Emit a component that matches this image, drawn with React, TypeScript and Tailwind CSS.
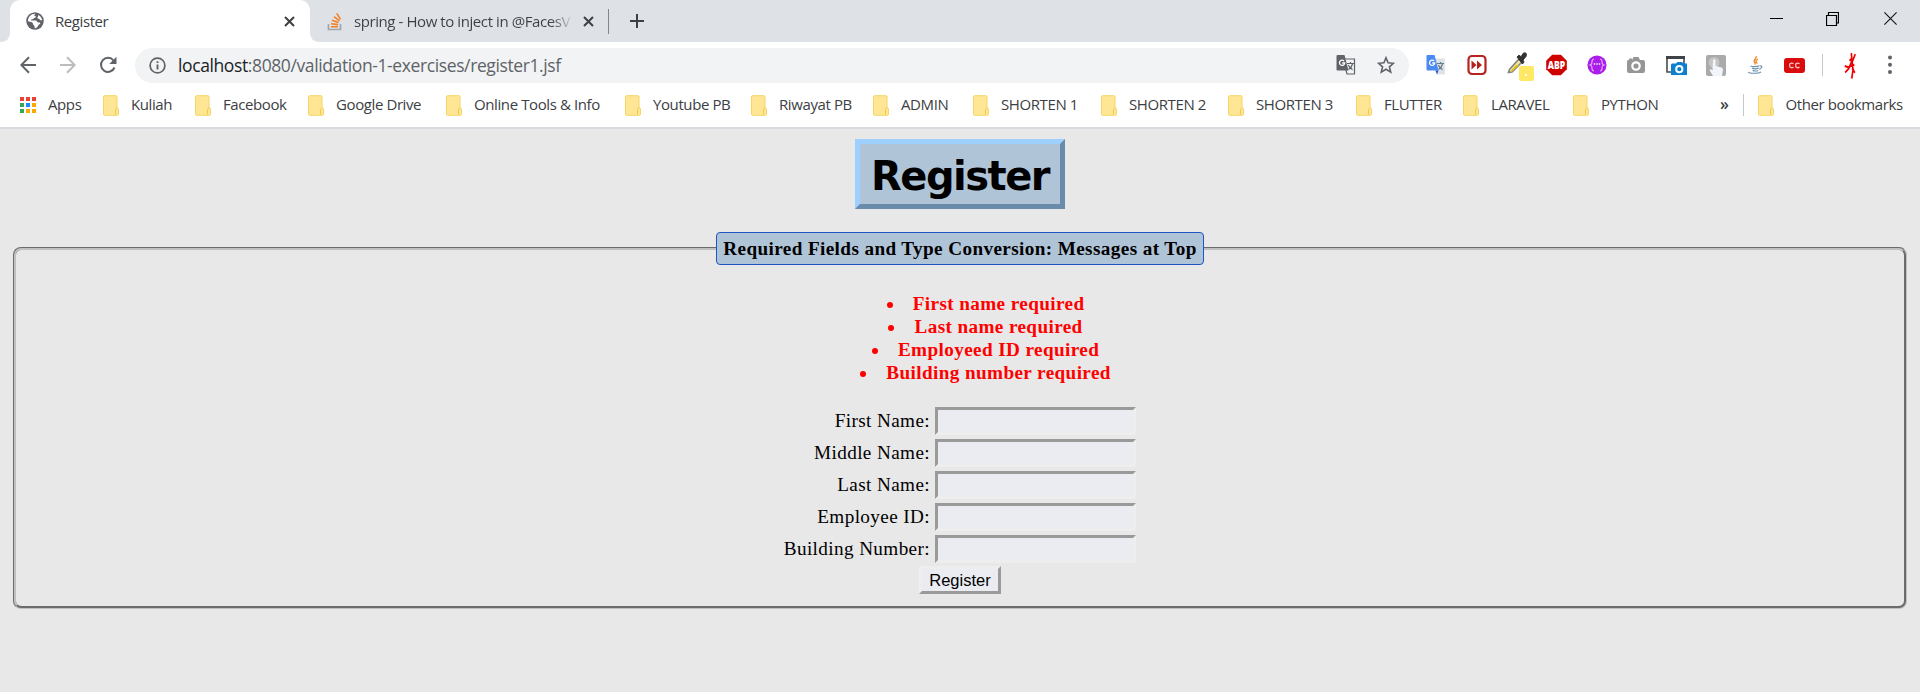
import React from "react";

const bookmarks = [
  { label: "Kuliah", w: "w-[92px]" },
  { label: "Facebook", w: "w-[113px]" },
  { label: "Google Drive", w: "w-[138px]" },
  { label: "Online Tools & Info", w: "w-[179px]" },
  { label: "Youtube PB", w: "w-[126px]" },
  { label: "Riwayat PB", w: "w-[122px]" },
  { label: "ADMIN", w: "w-[100px]" },
  { label: "SHORTEN 1", w: "w-[128px]" },
  { label: "SHORTEN 2", w: "w-[127px]" },
  { label: "SHORTEN 3", w: "w-[128px]" },
  { label: "FLUTTER", w: "w-[107px]" },
  { label: "LARAVEL", w: "w-[110px]" },
  { label: "PYTHON", w: "w-[110px]" },
];

const messages = [
  "First name required",
  "Last name required",
  "Employeed ID required",
  "Building number required",
];

const fields = ["First Name:", "Middle Name:", "Last Name:", "Employee ID:", "Building Number:"];

function Folder() {
  return (
    <svg width="17" height="21" viewBox="0 0 17 21" className="shrink-0">
      <path d="M1.500.7h11.500a1 1 0 0 1 1 1V13l1.500.7v5.600a1 1 0 0 1-1 1h-13a1 1 0 0 1-1-1v-17.600a1 1 0 0 1 1-1z" fill="#ffe694" stroke="#f5d567" />
      <path d="M12.500 19.500v-5q.5-1.500 1.800-1.500" fill="none" stroke="#efc94c" />
    </svg>
  );
}

function TabClose() {
  return (
    <svg width="11" height="11" viewBox="0 0 11 11" className="shrink-0">
      <path d="M1 1l9 9M10 1L1 10" stroke="#3c4043" strokeWidth="2" />
    </svg>
  );
}

function Tabs() {
  return (
    <div className="flex h-[42px] bg-[#dee1e6]">
      <svg width="10" height="42" className="shrink-0">
        <path d="M10 0V32Q10 42 0 42H10z" fill="#fff" />
      </svg>
      <div className="flex h-[42px] w-[300px] items-center rounded-t-[10px] bg-white pl-4">
        <svg width="18" height="18" viewBox="0 0 24 24" className="shrink-0">
          <circle cx="12" cy="12" r="11.700" fill="#5f6368" />
          <path
            d="M12.500 2.500c-2 1-1.500 2.200-.3 2.700 1.800.6 1.200 2.300-.5 2.500-1.700.1-1.200 1.700-2.700 2-1.400.2-2.600.4-2.300 1.600H13c1.600.2 1.600 2.400 3.200 2.600h2.300c.8.200.7 1.200.2 1.700-1 1-1.700.8-2.200 2-.6 1.400-1.900 3.700-4 4-1 0-1-1.400-1.100-2.400-.1-1.600-1.800-1.500-2-3.300-.2-1.600-1.200-2.200-2.700-2.600L2.600 12.200C2.500 6.800 6.800 2.300 12.500 2.500zM16 3.600c3 1.400 5.100 4.200 5.500 7.500l-2-.1c-1.300-.3-1.200-1.800-2.600-2.100-1.700-.3-2.200-1.600-1.200-2.700.7-.8 1-1.500.3-2.600z"
            fill="#fff"
          />
        </svg>
        <span className="ml-[11px] w-[229px] text-[15px] tracking-[-0.42px] text-[#3c4043]">Register</span>
        <TabClose />
      </div>
      <svg width="10" height="42" className="shrink-0">
        <path d="M0 0V32Q0 42 10 42H0z" fill="#fff" />
      </svg>
      <div className="flex items-center pl-[7px]">
        <svg width="15" height="20" viewBox="0 0 15 20" className="shrink-0">
          <path d="M1.500 13v5.500h12V13" fill="none" stroke="#a3a8ad" strokeWidth="1.700" />
          <path d="M4 15.800h7M4.100 12.800l7 .8M5 9.300l6.500 2.200M7 5.600l5.500 4.300M9.800 2.300l3.700 6" stroke="#f48024" strokeWidth="1.600" />
        </svg>
        <span className="ml-[12px] block w-[219px] overflow-hidden bg-linear-to-r from-[#3c4043] from-90% to-[#dee1e6] bg-clip-text text-[15px] tracking-[-0.42px] whitespace-nowrap text-transparent">
          spring - How to inject in @FacesV
        </span>
        <span className="ml-[10px] flex"><TabClose /></span>
        <div className="ml-[14px] h-[25px] w-px bg-[#80868b]" />
        <svg width="16" height="16" viewBox="0 0 16 16" className="ml-5">
          <path d="M8 1v14M1 8h14" stroke="#3c4043" strokeWidth="2" />
        </svg>
      </div>
      <div className="mr-[23px] ml-auto flex items-center pb-[5px]">
        <svg width="13" height="13" viewBox="0 0 13 13"><path d="M0 6.500h13" stroke="#000" /></svg>
        <svg width="13" height="14" viewBox="0 0 13 14" className="ml-[43px]">
          <path d="M.5 3.500h10v10H.5zM2.500 3V.5h10v10.500h-2" fill="none" stroke="#000" strokeWidth="1.200" />
        </svg>
        <svg width="13" height="13" viewBox="0 0 13 13" className="ml-[45px]">
          <path d="M.4.400l12.200 12.200M12.600.400L.4 12.600" stroke="#111" strokeWidth="1.100" />
        </svg>
      </div>
    </div>
  );
}

function TranslateIcon({ gray }: { gray?: boolean }) {
  return (
    <svg width="20" height="22" viewBox="0 0 20 22">
      <path d="M7 5h11.500v15H11z" fill={gray ? "#f1f3f4" : "#dfe1e5"} stroke={gray ? "#5f6368" : "#e4e6ea"} strokeWidth="1.200" />
      <path d="M11 9.500h7M14.500 8v1.500M16.500 10c-.6 2.500-2 4.200-4 5.500M12.300 11c1 2 2.500 3.500 4.200 4.800" stroke={gray ? "#5f6368" : "#607d8b"} strokeWidth="1.200" fill="none" />
      <path d="M1.500 1h7l4 15.500h-11a1 1 0 0 1-1-1V2a1 1 0 0 1 1-1z" fill={gray ? "#5f6368" : "#4a8af4"} />
      {!gray && <path d="M9.500 16.500h3l-1.500 4z" fill="#2456c5" />}
      <path d="M8 7a2.600 2.600 0 1 0 .7 2H6.300" stroke="#fff" strokeWidth="1.300" fill="none" />
    </svg>
  );
}

function Toolbar() {
  return (
    <div className="flex h-[46px] items-center bg-white pl-5">
      <svg width="16" height="18" viewBox="0 0 16 18">
        <path d="M16 9H1.500M9 1.200L1.300 9 9 16.800" fill="none" stroke="#5f6368" strokeWidth="2" />
      </svg>
      <svg width="16" height="18" viewBox="0 0 16 18" className="ml-6">
        <path d="M0 9h14.500M7 1.200L14.700 9 7 16.800" fill="none" stroke="#babcbe" strokeWidth="2" />
      </svg>
      <svg width="18" height="18" viewBox="0 0 18 18" className="ml-[23px]">
        <path d="M15.500 11.500A7 7 0 1 1 14.500 4.500" fill="none" stroke="#5f6368" strokeWidth="2" />
        <path d="M17.500.8V8h-7.200z" fill="#5f6368" />
      </svg>
      <div className="ml-[18px] flex h-[35px] w-[1274px] items-center rounded-full bg-[#f1f3f4] pl-[14px]">
        <svg width="17" height="17" viewBox="0 0 17 17">
          <circle cx="8.500" cy="8.500" r="7.400" fill="none" stroke="#5f6368" strokeWidth="1.700" />
          <path d="M8.500 7.500v5M8.500 4.200V6" stroke="#5f6368" strokeWidth="1.900" />
        </svg>
        <span className="ml-[12px] text-[17.500px] tracking-[-0.39px] whitespace-nowrap text-[#5f6368]">
          <span className="text-[#202124]">localhost</span>:8080/validation-1-exercises/register1.jsf
        </span>
        <div className="mr-[14px] ml-auto flex items-center gap-[21px]">
          <TranslateIcon gray />
          <svg width="18" height="18" viewBox="0 0 18 18">
            <path d="M9 1.800l2.100 5 5.400.5-4.100 3.500 1.300 5.300L9 13.200l-4.700 2.900 1.300-5.300-4.100-3.500 5.400-.5z" fill="none" stroke="#5f6368" strokeWidth="1.600" />
          </svg>
        </div>
      </div>
      <div className="ml-[17px] flex items-center">
        <div className="w-[41px]"><TranslateIcon /></div>
        <svg width="20" height="22" viewBox="0 0 20 21" className="mr-5">
          <rect x="1.500" y="1.500" width="17" height="18" rx="3.500" fill="#fff" stroke="#b72420" strokeWidth="2.200" />
          <path d="M4.500 6l5 4.500-5 4.500zM10 6l5 4.500-5 4.500z" fill="#b5221c" />
        </svg>
        <svg width="28" height="34" viewBox="0 0 28 34" className="mr-[11px]">
          <path d="M1.500 24.500l1-3L12 11l3 3-10 10z" fill="#f2e89a" stroke="#858585" strokeWidth="1.600" />
          <path d="M3.500 23L9 17h3l-7.500 7z" fill="#e5c318" />
          <path d="M10 9l2-1.800 2 1.500L16.500 5q4-1 2.500 3.500l-3 3.500 1 2-1.500 2z" fill="#333" stroke="#333" />
          <rect x="12" y="18" width="15" height="15" rx="2" fill="#ffe863" />
          <path d="M18 27h2" stroke="#fff" strokeWidth="2" />
        </svg>
        <svg width="21" height="22" viewBox="0 0 21 22" className="mr-5">
          <path d="M6.200.8h8.600l6 6v8.400l-6 6H6.200l-6-6V6.800z" fill="#cf0000" />
          <text x="10.500" y="14.600" textAnchor="middle" fontFamily="Open Sans, sans-serif" fontWeight="800" fontSize="10" textLength="17.500" lengthAdjust="spacingAndGlyphs" fill="#fff">ABP</text>
        </svg>
        <svg width="20" height="20" viewBox="0 0 20 20" className="mr-[19px]">
          <circle cx="10" cy="10" r="9.600" fill="#aa1dea" />
          <path d="M7 4C4.700 4.300 4.800 6 4.900 8c0 1-.7 1.600-1.900 2 1.200.4 1.900 1 1.900 2-.1 2-.2 3.700 2.100 4M13 4c2.300.3 2.200 2 2.100 4 0 1 .7 1.600 1.900 2-1.200.4-1.900 1-1.900 2 .1 2 .2 3.700-2.100 4" fill="none" stroke="#e0aef5" strokeWidth="1.200" />
          <path d="M6.800 9h1.400M9.300 9h1.400M11.800 9h1.400" stroke="#fff" strokeWidth="1.500" />
        </svg>
        <svg width="20" height="18" viewBox="0 0 20 18" className="mr-5">
          <path d="M2 4h1V2.500h3V4l1.500-3h5L14 4h3q2 0 2 2v9q0 2-2 2H3q-2 0-2-2V6q0-2 1-2z" fill="#969696" />
          <circle cx="10" cy="10" r="3.700" fill="#969696" stroke="#fff" strokeWidth="2.200" />
        </svg>
        <svg width="21" height="21" viewBox="0 0 21 21" className="mr-[19px]">
          <path d="M1 2h17v15H1z" fill="#fff" stroke="#4b4b4b" strokeWidth="1.600" />
          <path d="M0 1h19v3H0z" fill="#3e4347" />
          <path d="M6 8.500h4L11.500 7H16l1.500 1.500H21V20H5V9.500z" fill="#0c7fd1" />
          <circle cx="13.300" cy="14.200" r="3.100" fill="#0c7fd1" stroke="#fff" strokeWidth="2" />
        </svg>
        <svg width="20" height="21" viewBox="0 0 20 21" className="mr-[21px]">
          <rect width="20" height="21" rx="2" fill="#aaa" />
          <circle cx="8" cy="7.500" r="5.500" fill="#c5c5c5" />
          <path d="M7 5q1.500-1.500 2.500 0v6l6 1.500q1.500.5 1.500 2.500l-1 6H7l-3.500-6q1-1.500 3 .5z" fill="#f2f6fb" />
        </svg>
        <svg width="18" height="22" viewBox="0 0 20 22" className="mr-[19px]">
          <path d="M10 1c2 3-4 4-1.500 7 .8 1 .8 2 0 2.500M12 4.500c-4 2.500-1 3-1 5" fill="none" stroke="#ed8b27" strokeWidth="1.500" />
          <path d="M4 12c2 1 7 1 10-.2M5.500 14.500c2 .8 5.500.8 7.500 0M6.300 17c2 .8 4.500.8 6 0M1.500 18.700c1 2 12 2 14 0M14.500 12c3.500-.5 2 3-1 3.700" fill="none" stroke="#6991af" strokeWidth="1.300" />
        </svg>
        <svg width="21" height="17" viewBox="0 0 21 17">
          <rect y="1" width="21" height="15" rx="3" fill="#d90d0d" />
          <path d="M9.500 6.700q-2-1.300-3.500 0-1 1.700 0 3.400 1.500 1.300 3.500 0M15.500 6.700q-2-1.300-3.500 0-1 1.700 0 3.400 1.500 1.300 3.500 0" fill="none" stroke="#ffc5c5" strokeWidth="1.300" />
        </svg>
        <div className="ml-[17px] h-[22px] w-px bg-[#c4c7cb]" />
        <svg width="14" height="27" viewBox="0 0 16 26" preserveAspectRatio="none" className="ml-[20px]">
          <path d="M9.500 1L10 6.200 7.500 8.500M14 2l-3.500 7.500 1 7.500-1.500 8.500M11 7L6.500 16l-4 3.800M2 13.500l4 1.200 7-2.500M10.500 15.500l3 4.500" fill="none" stroke="#ed0000" strokeWidth="1.900" strokeLinejoin="round" />
        </svg>
        <svg width="4" height="20" viewBox="0 0 4 20" className="ml-[31px]">
          <circle cx="2" cy="2.500" r="2" fill="#5f6368" />
          <circle cx="2" cy="9.700" r="2" fill="#5f6368" />
          <circle cx="2" cy="16.900" r="2" fill="#5f6368" />
        </svg>
      </div>
    </div>
  );
}

function Bookmarks() {
  const cells = ["#ea4335", "#ea4335", "#ea4335", "#34a853", "#1a8cff", "#f9ab00", "#34a853", "#f9ab00", "#f9ab00"];
  return (
    <div className="flex h-[39px] items-center bg-white pb-[5px] pl-5 text-[15px] tracking-[-0.4px] whitespace-nowrap text-[#3c4043]">
      <div className="grid shrink-0 grid-cols-3 gap-[2px]">
        {cells.map((c, i) => (
          <div key={i} className="size-[4px]" style={{ background: c }} />
        ))}
      </div>
      <div className="ml-3 w-[55px] shrink-0 pb-px">Apps</div>
      {bookmarks.map((b) => (
        <div key={b.label} className={"flex shrink-0 items-center gap-[11px] " + b.w}>
          <Folder />
          <span className="pb-px">{b.label}</span>
        </div>
      ))}
      <span className="ml-[37px] pb-[3px] text-[16px] font-semibold">»</span>
      <div className="ml-[14px] h-[22px] w-px bg-[#c4c7cb]" />
      <div className="ml-[14px] flex items-center gap-[11px]">
        <Folder />
        <span className="pb-px">Other bookmarks</span>
      </div>
    </div>
  );
}

export default function App() {
  return (
    <div className="h-[692px] w-[1920px] overflow-hidden bg-[#e8e8e8] font-['Open_Sans',sans-serif]">
      <Tabs />
      <Toolbar />
      <Bookmarks />
      <div className="h-[2px] bg-[#d9dbe0]" />
      <main className="flex flex-col items-center pt-[10px] font-['Liberation_Serif',serif] text-[19.200px] text-black">
        <h1 className="flex h-[70px] w-[210px] items-center justify-center border-[5px] border-t-[#9dcfff] border-r-[#698cab] border-b-[#698cab] border-l-[#9dcfff] bg-[#b0c4d8] pt-[3px] font-['DejaVu_Sans',sans-serif] text-[40px] font-bold tracking-[-1.500px]">
          Register
        </h1>
        <fieldset className="mt-[23px] flex h-[377px] w-[1894px] flex-col items-center rounded-[8px] border-3 border-[#c0c0c0] [border-style:groove]">
          <legend className="mx-auto h-[33px] w-[488px] rounded-[4px] border border-[#1f56c4] bg-[#b0c4d8] text-center text-[19.200px] leading-[31px] font-bold tracking-[0.38px] whitespace-nowrap">
            Required Fields and Type Conversion: Messages at Top
          </legend>
          <ul className="mt-[27px] flex list-inside list-disc flex-col items-center pl-[51px] leading-[23px] font-bold tracking-[0.38px] text-[#f00]">
            {messages.map((m) => (
              <li key={m}>{m}</li>
            ))}
          </ul>
          <div className="mt-[23px] grid grid-cols-[146px_201px] gap-x-[5px] gap-y-[4px]">
            {fields.map((f) => (
              <label key={f} className="contents">
                <span className="flex justify-end leading-[28px] tracking-[0.38px] whitespace-nowrap">{f}</span>
                <input className="h-[28px] w-[201px] border-[3px] border-t-[#9a9a9a] border-r-[#eee] border-b-[#eee] border-l-[#9a9a9a] bg-[#ebecf2]" />
              </label>
            ))}
          </div>
          <button className="mt-[3px] h-[28px] w-[82px] border-[3px] border-t-[#eee] border-r-[#9a9a9a] border-b-[#9a9a9a] border-l-[#eee] bg-[#ebecf2] font-['Liberation_Sans',sans-serif] text-[16.500px] leading-[20px]">
            Register
          </button>
        </fieldset>
      </main>
    </div>
  );
}
